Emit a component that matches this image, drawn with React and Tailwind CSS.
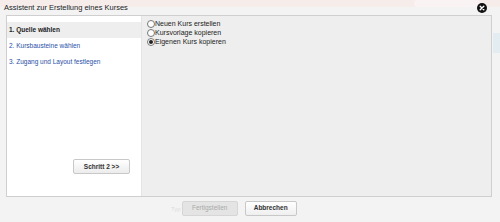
import { useState } from 'react';

const steps = [
  { label: '1. Quelle wählen', active: true },
  { label: '2. Kursbausteine wählen' },
  { label: '3. Zugang und Layout festlegen' },
];

const options = ['Neuen Kurs erstellen', 'Kursvorlage kopieren', 'Eigenen Kurs kopieren'];

function CloseIcon() {
  return (
    <svg width="10" height="10" viewBox="0 0 10 10">
      <circle cx="5" cy="5" r="5" fill="#111" />
      <path d="M3.2 3.2 L6.8 6.8 M6.8 3.2 L3.2 6.8" stroke="#fff" strokeWidth="1.4" strokeLinecap="round" />
    </svg>
  );
}

function Radio({ checked }) {
  return (
    <span className="flex h-[8px] w-[8px] shrink-0 items-center justify-center rounded-full border border-[#777] bg-white">
      {checked && <span className="h-[4px] w-[4px] rounded-full bg-[#222]" />}
    </span>
  );
}

export default function App() {
  const [choice, setChoice] = useState(2);

  return (
    <div className="relative h-[222px] w-[500px] overflow-hidden bg-[#f3f3f3] font-['Liberation_Sans',Arial,sans-serif]">
      {/* faint page behind the dialog */}
      <div className="flex h-[7px] w-full justify-end bg-[#f6ecea] pr-[20px]">
        <div className="h-[7px] w-[66px] rounded-sm bg-[#f9f4f3]" />
      </div>
      <div className="absolute right-0 top-[33px] h-[20px] w-[7px] bg-[#e2ecf1]" />

      <div className="absolute left-[4px] top-[4px] text-[7.5px] leading-[8px] text-[#222]">
        Assistent zur Erstellung eines Kurses
      </div>
      <button type="button" className="absolute right-[13px] top-[3px]">
        <CloseIcon />
      </button>

      <div className="ml-[6px] mt-[8px] flex h-[182px] w-[486px] border border-[#cfcfcf]">
        <div className="flex w-[134px] flex-col bg-white pt-[6px]">
          {steps.map((s) => (
            <div
              key={s.label}
              className={`flex h-[16px] items-center px-[2px] text-[6.5px] leading-none ${
                s.active ? 'bg-[#eeeeee] font-bold text-[#222]' : 'text-[#2a4fa8]'
              }`}
            >
              {s.label}
            </div>
          ))}
          <div className="flex flex-1 items-end justify-end pb-[22px] pr-[11px]">
            <button
              type="button"
              className="h-[15px] w-[57px] rounded-[2px] border border-[#c8c8c8] bg-gradient-to-b from-white to-[#ececec] text-[6.5px] font-bold text-[#333]"
            >
              Schritt 2 &gt;&gt;
            </button>
          </div>
        </div>
        <div className="flex flex-1 flex-col border-l border-[#e4e4e4] bg-[#eeeeee] pl-[5px] pt-[3px]">
          {options.map((o, i) => (
            <label
              key={o}
              className="flex h-[9px] cursor-pointer items-center text-[7px] leading-none text-[#222]"
              onClick={() => setChoice(i)}
            >
              <Radio checked={choice === i} />
              {o}
            </label>
          ))}
        </div>
      </div>

      <div className="mt-[4px] flex items-center pl-[171px]">
        <span className="mr-[1px] text-[6px] leading-none text-[#ddd]">Typ</span>
        <button
          type="button"
          disabled
          className="h-[15px] w-[56px] rounded-[2px] border border-[#d6d6d6] bg-[#e4e4e4] text-[6.5px] leading-none text-[#aaa]"
        >
          Fertigstellen
        </button>
        <button
          type="button"
          className="ml-[7px] h-[15px] w-[52px] rounded-[2px] border border-[#c8c8c8] bg-gradient-to-b from-white to-[#efefef] text-[6.5px] font-bold leading-none text-[#333]"
        >
          Abbrechen
        </button>
      </div>
    </div>
  );
}
